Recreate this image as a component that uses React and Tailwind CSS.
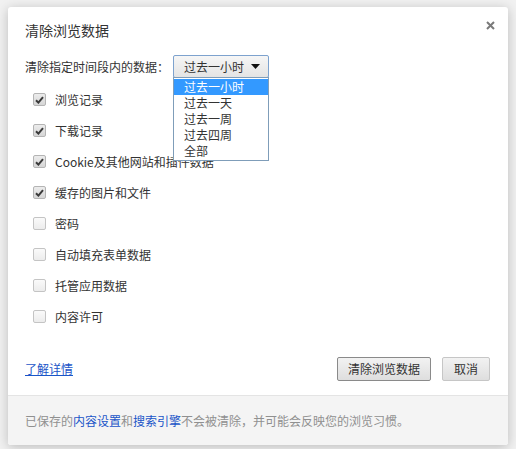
import React from 'react'

const rows = [
  { label: '浏览记录', checked: true },
  { label: '下载记录', checked: true },
  { label: 'Cookie及其他网站和插件数据', checked: true },
  { label: '缓存的图片和文件', checked: true },
  { label: '密码', checked: false },
  { label: '自动填充表单数据', checked: false },
  { label: '托管应用数据', checked: false },
  { label: '内容许可', checked: false },
]

const options = ['过去一小时', '过去一天', '过去一周', '过去四周', '全部']

function Checkbox({ checked }) {
  if (checked) {
    return (
      <span className="flex h-[13px] w-[13px] items-center justify-center rounded-[2px] border border-[#b4b4b4] bg-gradient-to-b from-[#ececec] to-[#d6d6d6]">
        <svg width="9" height="8" viewBox="0 0 9 8">
          <path d="M1 4.2 L3.4 6.6 L8 1.2" fill="none" stroke="#3a3a3a" strokeWidth="2" />
        </svg>
      </span>
    )
  }
  return (
    <span className="h-[13px] w-[13px] rounded-[2px] border border-[#c4c4c4] bg-gradient-to-b from-[#fafafa] to-[#ececec]" />
  )
}

export default function App() {
  return (
    <div
      className="min-h-screen bg-[#f1f1f1] pl-2 pt-[7px] text-[12px] text-[#333]"
      style={{ fontFamily: '"Noto Sans CJK SC", "Noto Sans", sans-serif' }}
    >
      <div className="relative flex w-[500px] flex-col rounded-[3px] bg-white shadow-[0_2px_12px_rgba(0,0,0,0.22)]">
        <button className="absolute right-[10px] top-[10px] flex h-[16px] w-[16px] items-center justify-center">
          <svg width="9" height="9" viewBox="0 0 9 9">
            <path d="M1 1 L8 8 M8 1 L1 8" stroke="#7a7a7a" strokeWidth="2" />
          </svg>
        </button>

        <div className="pl-[17px] pr-[18px] pt-[13px]">
          <h1 className="text-[14px] leading-[20px] text-[#333]">清除浏览数据</h1>

          <div className="mt-[15px] flex items-center">
            <span className="leading-[22px]">清除指定时间段内的数据：</span>
            <div className="relative ml-[4px]">
              <div className="flex h-[23px] w-[96px] items-center justify-between rounded-[2px] border border-[#7da2ce] bg-gradient-to-b from-[#f6f6f6] to-[#e4e4e4] pl-[10px] pr-[8px]">
                <span className="leading-[16px]">过去一小时</span>
                <svg width="9" height="5" viewBox="0 0 9 5">
                  <path d="M0 0 H9 L4.5 5 Z" fill="#111" />
                </svg>
              </div>
              <ul className="absolute left-0 top-[22px] z-10 w-[96px] border border-[#7f9db9] bg-white py-px">
                {options.map((o, i) => (
                  <li
                    key={o}
                    className={
                      i === 0
                        ? 'h-[16px] bg-[#3399ff] pl-[10px] leading-[16px] text-white'
                        : 'h-[16px] pl-[10px] leading-[16px] text-[#333]'
                    }
                  >
                    {o}
                  </li>
                ))}
              </ul>
            </div>
          </div>

          <div className="mt-[6px] flex flex-col">
            {rows.map((r) => (
              <label key={r.label} className="flex h-[31px] items-center pl-[8px]">
                <Checkbox checked={r.checked} />
                <span className="ml-[9px] leading-[16px]">{r.label}</span>
              </label>
            ))}
          </div>

          <div className="mt-[25px] flex items-center justify-between pb-[14px]">
            <a href="#" className="leading-[16px] text-[#1a55c8] underline">
              了解详情
            </a>
            <div className="flex gap-[11px]">
              <button className="h-[24px] w-[94px] rounded-[2px] border border-[#8a8a8a] bg-gradient-to-b from-[#f2f2f2] to-[#dedede] leading-[16px] text-[#333]">
                清除浏览数据
              </button>
              <button className="h-[24px] w-[48px] rounded-[2px] border border-[#c6c6c6] bg-gradient-to-b from-[#f2f2f2] to-[#dedede] leading-[16px] text-[#333]">
                取消
              </button>
            </div>
          </div>
        </div>

        <div className="flex h-[50px] items-center rounded-b-[3px] border-t border-[#e4e4e4] bg-[#f4f4f4] pl-[17px]">
          <p className="leading-[16px] text-[#909090]">
            已保存的<a href="#" className="text-[#1a55c8]">内容设置</a>和
            <a href="#" className="text-[#1a55c8]">搜索引擎</a>不会被清除，并可能会反映您的浏览习惯。
          </p>
        </div>
      </div>
    </div>
  )
}
